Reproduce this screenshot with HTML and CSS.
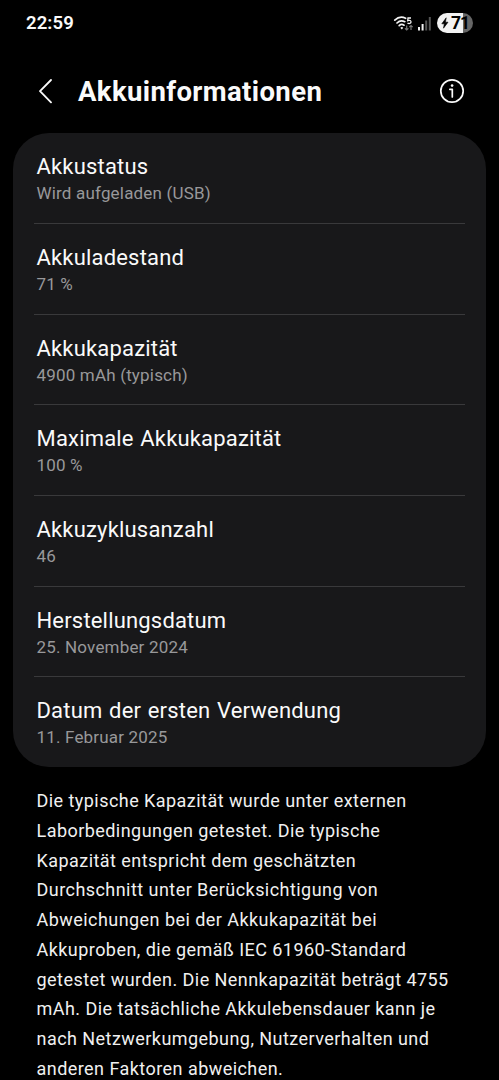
FILE: index.html
```html
<!DOCTYPE html>
<html lang="de">
<head>
  <meta charset="utf-8">
  <title>Akkuinformationen</title>
  <link rel="stylesheet" href="styles.css">
</head>
<body>
  <div class="statusbar">
    <span class="clock">22:59</span>
    <div class="status-icons">
      <svg class="wifi" width="21" height="17" viewBox="0 0 21 17" fill="none">
        <path d="M1.8 5.2C5 2.1 9.4 1.6 12.6 3.3M4 8C6.2 5.7 9.2 5.3 11.8 6.7M6.2 10.6C7.6 9.3 9.4 9.2 11 10.2" stroke="#f2f2f2" stroke-width="1.7" stroke-linecap="round"/>
        <path d="M7.3 12.7q1.5-1.4 3 0L8.8 14.6z" fill="#f2f2f2"/>
        <path d="M18 3h-3l-.3 2.7c2-.9 3.5 0 3.3 1.4-.2 1.5-2.2 1.9-3.5.8" stroke="#f2f2f2" stroke-width="1.3"/>
        <path d="M13.7 10.5V15m-1.7-1.7l1.7 1.7 1.7-1.7M18 15v-4.5m-1.7 1.7l1.7-1.7 1.7 1.7" stroke="#777" stroke-width="1.2"/>
      </svg>
      <svg class="signal" width="13" height="14" viewBox="0 0 13 14">
        <path d="M0 10h2v3.500H0zM3.600 7h2v6.500h-2z" fill="#f2f2f2"/>
        <path d="M7.200 3.500h2v10h-2zM10.800 0h2v13.500h-2z" fill="#555"/>
      </svg>
      <div class="battery">
        <svg width="8" height="12" viewBox="0 0 8 12"><path d="M5.200.8L.8 6.800h2.500L2.500 11.200 7 5.200H4.400z" fill="#000" stroke="#000" stroke-width=".6"/></svg>
        <span>71</span>
      </div>
    </div>
  </div>

  <header class="titlebar">
    <svg class="back" width="14" height="26" viewBox="0 0 14 26" fill="none">
      <path d="M13 2L2 13.2 13 24.4" stroke="#fafafa" stroke-width="1.8" stroke-linecap="round" stroke-linejoin="round"/>
    </svg>
    <h1>Akkuinformationen</h1>
    <svg class="info" width="26" height="26" viewBox="0 0 26 26" fill="none">
      <circle cx="13" cy="13" r="11.2" stroke="#fafafa" stroke-width="1.7"/>
      <path d="M10.8 11.3h2.5v7.7" stroke="#fafafa" stroke-width="1.7" stroke-linecap="round" stroke-linejoin="round"/>
      <circle cx="13.1" cy="7.6" r="1.3" fill="#fafafa"/>
    </svg>
  </header>

  <ul class="card">
    <li><h2>Akkustatus</h2><p>Wird aufgeladen (USB)</p></li>
    <li><h2>Akkuladestand</h2><p>71 %</p></li>
    <li><h2>Akkukapazität</h2><p>4900 mAh (typisch)</p></li>
    <li><h2>Maximale Akkukapazität</h2><p>100 %</p></li>
    <li><h2>Akkuzyklusanzahl</h2><p>46</p></li>
    <li><h2>Herstellungsdatum</h2><p>25. November 2024</p></li>
    <li><h2>Datum der ersten Verwendung</h2><p>11. Februar 2025</p></li>
  </ul>

  <p class="note">
    Die typische Kapazität wurde unter externen<br>
    Laborbedingungen getestet. Die typische<br>
    Kapazität entspricht dem geschätzten<br>
    Durchschnitt unter Berücksichtigung von<br>
    Abweichungen bei der Akkukapazität bei<br>
    Akkuproben, die gemäß IEC 61960-Standard<br>
    getestet wurden. Die Nennkapazität beträgt 4755<br>
    mAh. Die tatsächliche Akkulebensdauer kann je<br>
    nach Netzwerkumgebung, Nutzerverhalten und<br>
    anderen Faktoren abweichen.
  </p>
</body>
</html>
```
FILE: styles.css
```css
* { box-sizing: border-box; margin: 0; padding: 0; }

body {
  height: 1080px;
  overflow: hidden;
  background: #000;
  color: #fafafa;
  font-family: Roboto, "Liberation Sans", sans-serif;
}

.statusbar {
  display: flex;
  align-items: center;
  justify-content: space-between;
  height: 46px;
  padding: 0 26px;
}
.clock { font-size: 18.5px; font-weight: 600; letter-spacing: 0.1px; }
.status-icons { display: flex; align-items: center; }
.signal { margin: 1px 6px 0 4px; }

.battery {
  display: flex;
  align-items: center;
  justify-content: center;
  gap: 2px;
  width: 36px;
  height: 20px;
  border-radius: 10px;
  background: linear-gradient(90deg, #f2f2f2 71%, #666 71%);
  color: #000;
  font-size: 17.5px;
  font-weight: 700;
  line-height: 20px;
  letter-spacing: -1px;
}

.titlebar {
  display: flex;
  align-items: center;
  height: 86.5px;
  padding: 4px 34px 0 38px;
}
.titlebar h1 {
  flex: 1;
  margin-left: 26px;
  font-size: 27.5px;
  font-weight: 700;
  letter-spacing: 0.38px;
}

.card {
  margin: 0 13px;
  border-radius: 36px;
  background: #18181a;
  list-style: none;
}
.card li {
  height: 90.7px;
  margin: 0 21px;
  padding: 19px 2.5px 0;
  border-bottom: 1px solid #39393b;
}
.card li:first-child { height: 91.4px; padding-top: 19.6px; }
.card li:last-child { height: 89.7px; border-bottom: 0; }
.card h2 {
  font-size: 22px;
  font-weight: 400;
  line-height: 29px;
  letter-spacing: 0.18px;
  word-spacing: 1px;
}
.card p {
  color: #98989a;
  font-size: 17px;
  line-height: 24px;
  letter-spacing: 0.18px;
}

.note {
  padding: 19px 0 0 36.5px;
  color: #f0f0f0;
  font-size: 18px;
  line-height: 29.75px;
  letter-spacing: 0.45px;
  white-space: nowrap;
}
```
